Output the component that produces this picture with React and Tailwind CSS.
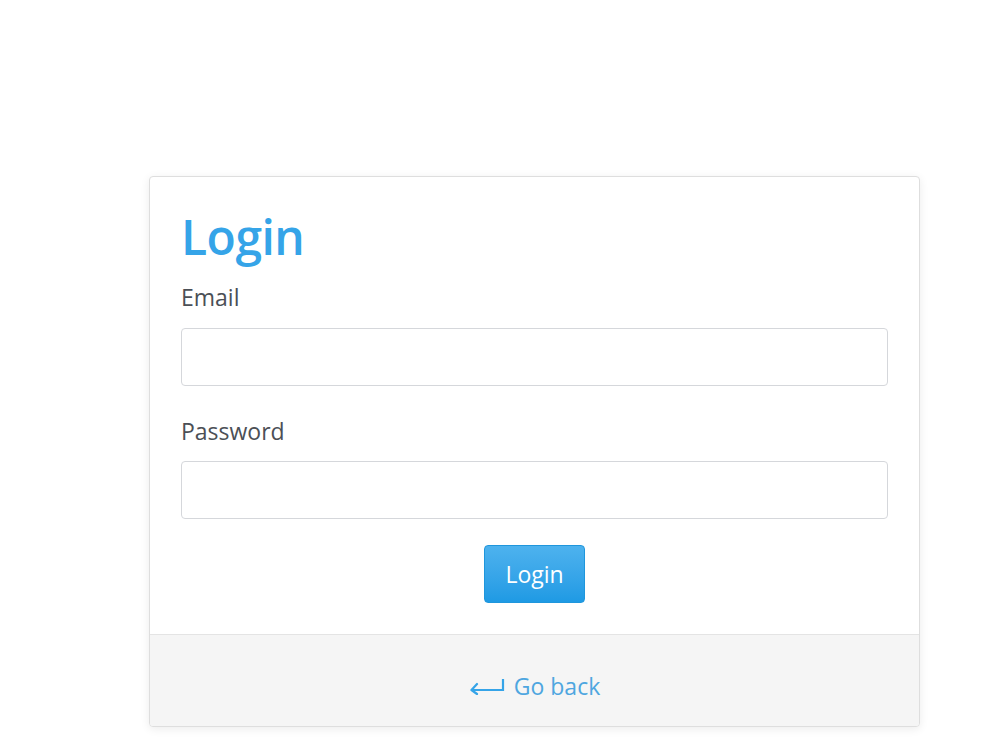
import React from "react";

export default function App() {
  return (
    <div className="min-h-[750px] w-[1000px] bg-white pt-[176px] pl-[149px]" style={{ fontFamily: '"Open Sans", "Noto Sans", sans-serif' }}>
      <div className="w-[771px] rounded-[4px] border border-[#dedede] bg-white shadow-[0_2px_10px_rgba(0,0,0,0.08)] overflow-hidden">
        <div className="px-[31px] pt-[30px] pb-[31px]">
          <h1 className="text-[48px] leading-[60px] font-semibold text-[#35a4e8] tracking-[-0.5px]">Login</h1>
          <label className="mt-[15px] block text-[23px] leading-[30px] text-[#4b4f56]">Email</label>
          <input type="email" className="mt-[16px] block h-[58px] w-[707px] rounded-[4px] border border-[#d5d7db] bg-white" />
          <label className="mt-[30px] block text-[23px] leading-[30px] text-[#4b4f56]">Password</label>
          <input type="password" className="mt-[15px] block h-[58px] w-[707px] rounded-[4px] border border-[#d5d7db] bg-white" />
          <div className="mt-[26px] flex justify-center">
            <button className="h-[58px] w-[101px] rounded-[4px] border border-[#1f96dc] bg-gradient-to-b from-[#4db2ee] to-[#1e9ae4] text-[23px] text-white">Login</button>
          </div>
        </div>
        <div className="flex h-[92px] items-center justify-center gap-[9px] border-t border-[#e4e4e4] bg-[#f5f5f5] pt-[12px]">
          <svg width="36" height="16" viewBox="0 0 36 16" fill="none" stroke="#35a4e8" strokeWidth="2.2" strokeLinecap="square">
            <path d="M34 1 V11 H3" />
            <path d="M8 5 L2.5 11 L8 15" strokeLinecap="round" strokeLinejoin="round" />
          </svg>
          <span className="text-[23px] text-[#4ea6e0]">Go back</span>
        </div>
      </div>
    </div>
  );
}
